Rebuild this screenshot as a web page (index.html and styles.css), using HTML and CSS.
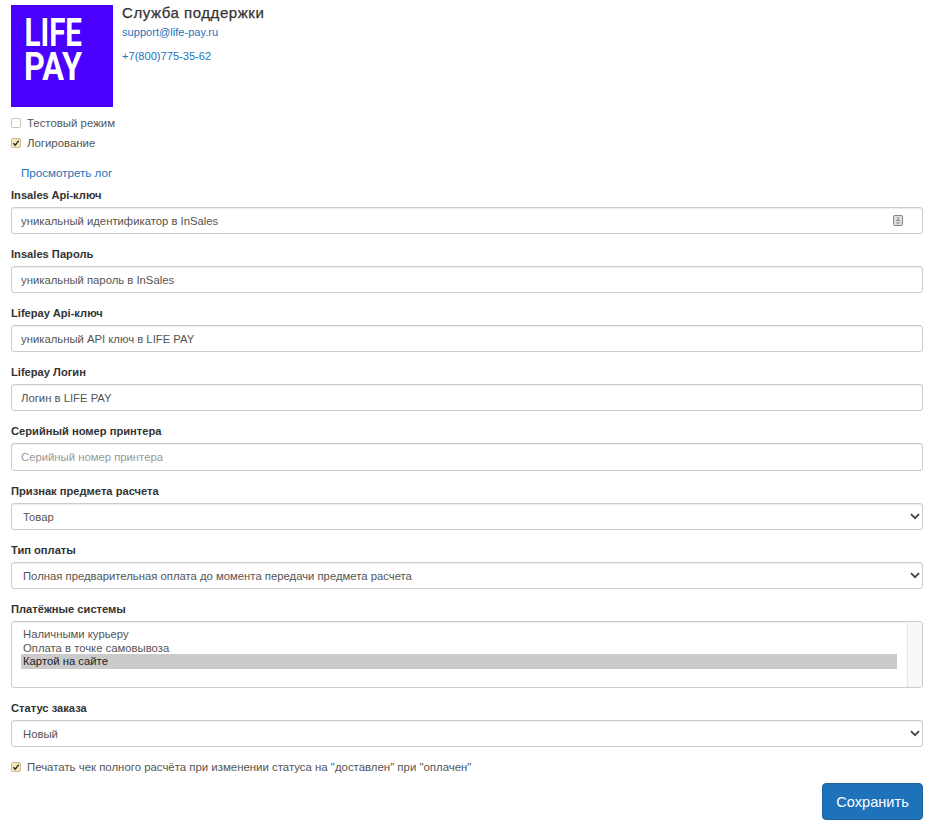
FILE: index.html
```html
<!DOCTYPE html>
<html lang="ru">
<head>
<meta charset="utf-8">
<title>LIFE PAY</title>
<link rel="stylesheet" href="styles.css">
</head>
<body>
<form class="page">
  <header class="head">
    <svg class="logo" viewBox="0 0 102 102">
      <rect width="102" height="102"/>
      <text x="13.5" y="41" textLength="57.5" lengthAdjust="spacingAndGlyphs">LIFE</text>
      <text x="13" y="75" textLength="58" lengthAdjust="spacingAndGlyphs">PAY</text>
    </svg>
    <div class="support">
      <h1>Служба поддержки</h1>
      <a href="#">support@life-pay.ru</a>
      <a href="#">+7(800)775-35-62</a>
    </div>
  </header>
  <div class="checks">
    <label class="check"><span class="box"></span>Тестовый режим</label>
    <label class="check"><span class="box on"><svg viewBox="0 0 9 9"><path d="M1.5 4.8 3.6 7 7.6 1.8"/></svg></span>Логирование</label>
  </div>
  <a class="log" href="#">Просмотреть лог</a>

  <div class="field">
    <label>Insales Api-ключ</label>
    <div class="control">
      <input type="text" value="уникальный идентификатор в InSales">
      <svg class="keyicon" viewBox="0 0 10 11"><rect x=".5" y=".5" width="9" height="10" rx="1"/><path d="M5 2v3.5M3.2 5.5h3.6M3.2 8h3.6"/></svg>
    </div>
  </div>
  <div class="field"><label>Insales Пароль</label><div class="control"><input type="text" value="уникальный пароль в InSales"></div></div>
  <div class="field"><label>Lifepay Api-ключ</label><div class="control"><input type="text" value="уникальный API ключ в LIFE PAY"></div></div>
  <div class="field"><label>Lifepay Логин</label><div class="control"><input type="text" value="Логин в LIFE PAY"></div></div>
  <div class="field"><label>Серийный номер принтера</label><div class="control high"><input type="text" placeholder="Серийный номер принтера"></div></div>
  <div class="field"><label>Признак предмета расчета</label>
    <div class="control"><select><option>Товар</option></select><svg class="chev" viewBox="0 0 10 7"><path d="M1 1.2 5 5.2 9 1.2"/></svg></div>
  </div>
  <div class="field"><label>Тип оплаты</label>
    <div class="control"><select><option>Полная предварительная оплата до момента передачи предмета расчета</option></select><svg class="chev" viewBox="0 0 10 7"><path d="M1 1.2 5 5.2 9 1.2"/></svg></div>
  </div>
  <div class="field"><label>Платёжные системы</label>
    <div class="listbox" role="listbox">
      <ul>
        <li>Наличными курьеру</li>
        <li>Оплата в точке самовывоза</li>
        <li class="sel">Картой на сайте</li>
      </ul>
      <div class="track"></div>
    </div>
  </div>
  <div class="field"><label>Статус заказа</label>
    <div class="control"><select><option>Новый</option></select><svg class="chev" viewBox="0 0 10 7"><path d="M1 1.2 5 5.2 9 1.2"/></svg></div>
  </div>
  <label class="check"><span class="box on"><svg viewBox="0 0 9 9"><path d="M1.5 4.8 3.6 7 7.6 1.8"/></svg></span>Печатать чек полного расчёта при изменении статуса на "доставлен" при "оплачен"</label>
  <div class="actions"><button type="button">Сохранить</button></div>
</form>
</body>
</html>
```
FILE: styles.css
```css
* { box-sizing: border-box; }
html, body { margin: 0; background: #fff; }
body { font-family: "Liberation Sans", Arial, sans-serif; font-size: 11.3px; color: #333; }
a { color: #1d74bb; text-decoration: none; }
.page { padding: 5px 12px 0 11px; display: flex; flex-direction: column; }
.head { display: flex; gap: 9px; }
.logo { width: 102px; height: 102px; flex: none; fill: #fff; }
.logo rect { fill: #4a00ff; }
.logo text { font-family: Roboto, "Liberation Sans", sans-serif; font-weight: 700; font-size: 38px; }
.support { display: flex; flex-direction: column; align-items: flex-start; }
.support h1 { margin: 0 0 4px; font-size: 15px; line-height: 16px; font-weight: 400; letter-spacing: .55px; color: #333; -webkit-text-stroke: .25px #333; }
.support a { font-size: 11.1px; line-height: 14px; margin-bottom: 10px; }
.checks { display: flex; flex-direction: column; gap: 6px; margin-top: 9px; }
.check { display: flex; align-items: center; gap: 6px; line-height: 14px; font-size: 11.42px; color: #555; }
.box { width: 10px; height: 10px; border: 1px solid #c4c4c4; border-radius: 2px; background: #fff; display: flex; flex: none; }
.box.on { background: #f6e7bd; border-color: #c9b98c; }
.box svg { width: 8px; height: 8px; fill: none; stroke: #222; stroke-width: 1.5; }
.log { margin: 16px 0 8px 10px; line-height: 14px; font-size: 11.6px; }
.field { display: flex; flex-direction: column; margin-bottom: 13px; }
.field label { font-weight: 700; font-size: 11.15px; line-height: 14px; color: #333; margin-bottom: 5px; }
.control { position: relative; display: flex; }
.control.high input { height: 28px; }
input, select { width: 100%; height: 27px; border: 1px solid #ccc; border-radius: 3px; background: #fff; padding: 0 9px; font: 11.3px "Liberation Sans", Arial, sans-serif; color: #555; box-shadow: inset 0 1px 1px rgba(0,0,0,.075); outline: 0; }
input::placeholder { color: #999; opacity: 1; }
select { appearance: none; -webkit-appearance: none; padding-left: 11px; }
.chev { position: absolute; right: 3px; top: 10px; width: 10px; height: 7px; fill: none; stroke: #444; stroke-width: 1.9; pointer-events: none; }
.keyicon { position: absolute; right: 20px; top: 8px; width: 10px; height: 11px; fill: #dcdcdc; stroke: #858585; stroke-width: 1; }
.listbox { display: flex; height: 67px; border: 1px solid #ccc; border-radius: 3px; box-shadow: inset 0 1px 1px rgba(0,0,0,.075); overflow: hidden; }
.listbox ul { flex: 1; list-style: none; margin: 0; padding: 6px 10px 0 9px; color: #555; }
.listbox li { line-height: 13.5px; padding-left: 2px; }
.listbox li.sel { background: #cbcbcb; color: #222; margin-top: -1px; padding-top: 1px; }
.track { width: 15px; background: #f8f8f8; border-left: 1px solid #e6e6e6; }
.actions { display: flex; justify-content: flex-end; margin-top: 9px; }
button { width: 101px; height: 37px; border: 1px solid #1a64a4; border-radius: 4px; background: #1d72b9; color: #fff; font: 14.6px "Liberation Sans", Arial, sans-serif; }
```
